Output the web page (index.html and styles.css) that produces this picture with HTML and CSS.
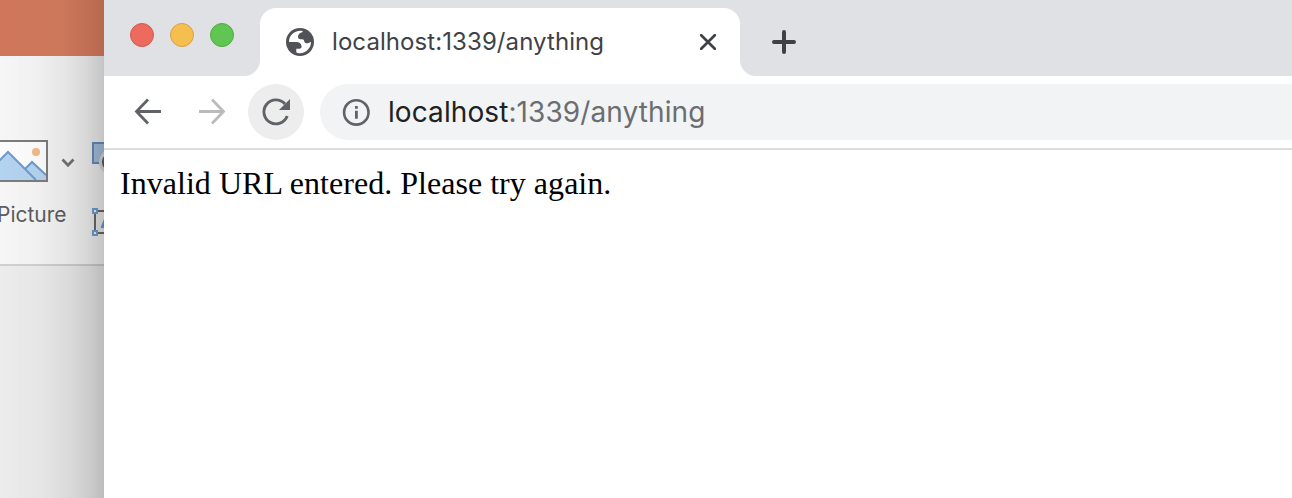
FILE: index.html
```html
<!DOCTYPE html>
<html lang="en">
<head>
<meta charset="utf-8">
<title>localhost:1339/anything</title>
<link rel="stylesheet" href="styles.css">
</head>
<body>
<div class="desktop">
  <aside class="office">
    <div class="office-title"></div>
    <div class="ribbon">
      <div class="ribbon-icons">
        <svg class="picture-icon" width="48" height="42" viewBox="0 0 48 42"><path d="M-2 1H47V41H-2Z" fill="#fdfdfd"/><path d="M-4 24L8 11L36 40H-4Z" fill="#b4d3f0"/><path d="M25 29L32 22L46 35V40H36Z" fill="#b4d3f0"/><path d="M-4 24L8 12L36 40M25 29L32 22L46 35" fill="none" stroke="#6f9bc9" stroke-width="2"/><circle cx="36" cy="12" r="4" fill="#f3ba88"/><path d="M-2 1H47V41H-2Z" fill="none" stroke="#7c7c7c" stroke-width="2"/></svg>
        <svg class="chevron" width="14" height="10" viewBox="0 0 14 10"><path d="M1.5 1.5L7 7.3L12.5 1.5" fill="none" stroke="#757575" stroke-width="2.7"/></svg>
        <svg class="shapes-icon" width="12" height="30" viewBox="0 0 12 30"><path d="M1 1H20V21H1Z" fill="#a9c4e4" stroke="#6a90c2" stroke-width="2"/><circle cx="20" cy="20" r="13" fill="#ddd"/><circle cx="20" cy="20" r="9.5" fill="#666" stroke="#555" stroke-width="1"/></svg>
      </div>
      <div class="ribbon-labels">
        <span class="label">Picture</span>
        <svg class="textbox-icon" width="12" height="28" viewBox="0 0 12 28"><path d="M3 3H20V25H3Z" fill="#f3f3f3" stroke="#6c6c6c" stroke-width="2"/><path d="M10 20L14 10" stroke="#6a9fd5" stroke-width="3"/><path d="M1 1H5V5H1ZM1 23H5V27H1Z" fill="#f4faff" stroke="#73a3d4" stroke-width="2"/></svg>
      </div>
    </div>
    <div class="office-canvas"></div>
    <div class="window-shadow"></div>
  </aside>
  <main class="browser">
    <div class="tab-strip">
      <div class="lights"><i class="light red"></i><i class="light yellow"></i><i class="light green"></i></div>
      <div class="tab">
        <svg class="globe" width="28" height="28" viewBox="0 0 28 28"><circle cx="14" cy="14" r="14" fill="#505257"/><path d="M3 14C3 7.8 7.8 3 14.5 2.8C16 2.8 16.8 3.2 16.8 4C13.5 4.8 12 6.5 12 9C12 11 13.5 11.2 16 11.2C18 11.5 18 12.3 18.5 14C19.5 16 22.5 15.5 25 13.8C25.2 20 20 25.2 14 25.2C12.5 25.2 11 24.8 10.3 24.2V20.8H13C15 20.8 16 19.5 15.5 18C15 15.5 13.5 14 10 14Z" fill="#fff"/></svg>
        <span class="tab-title">localhost:1339/anything</span>
        <svg class="close" width="16" height="16" viewBox="0 0 16 16"><path d="M1.2 1.2L14.8 14.8M14.8 1.2L1.2 14.8" stroke="#3e4145" stroke-width="2.7" stroke-linecap="round"/></svg>
      </div>
      <svg class="new-tab" width="24" height="24" viewBox="0 0 24 24"><path d="M12 2V22M2 12H22" stroke="#3e4145" stroke-width="4" stroke-linecap="round"/></svg>
    </div>
    <div class="toolbar">
      <svg class="nav" width="56" height="56" viewBox="0 0 56 56"><path d="M41 27.5H17M28 15.5L16.5 27.5L28 39.5" fill="none" stroke="#5f6368" stroke-width="2.8"/></svg>
      <svg class="nav" width="56" height="56" viewBox="0 0 56 56"><path d="M15 27.5H39M28 15.5L39.5 27.5L28 39.5" fill="none" stroke="#b9bbbd" stroke-width="2.8"/></svg>
      <svg class="nav reload" width="56" height="56" viewBox="0 0 56 56"><path d="M39.2 32A12 12 0 1 1 37 20" fill="none" stroke="#5f6368" stroke-width="2.9"/><path d="M42 15V26H31Z" fill="#5f6368"/></svg>
      <div class="address">
        <svg class="info" width="28" height="28" viewBox="0 0 28 28"><circle cx="14.3" cy="14.4" r="12.2" fill="none" stroke="#5f6368" stroke-width="2.6"/><path d="M13 8H15.8V10.8H13ZM13 12.8H15.8V20.8H13Z" fill="#5f6368"/></svg>
        <span class="url"><span class="host">localhost</span>:1339/anything</span>
      </div>
    </div>
    <div class="page">Invalid URL entered. Please try again.</div>
  </main>
</div>
</body>
</html>
```
FILE: styles.css
```css
* { box-sizing: border-box; }
body { margin: 0; overflow: hidden; }
svg { display: block; flex: none; }
.desktop { display: grid; grid-template-columns: 104px 1fr; width: 1292px; height: 498px; background: #fff; }
.office { position: relative; display: flex; flex-direction: column; overflow: hidden; font-family: Inter, sans-serif; }
.office-title { z-index: 1; height: 56px; background: linear-gradient(90deg, #d0775b, #cd775b 60%, #b76950); }
.ribbon { height: 210px; background: #f6f6f6; border-bottom: 2px solid #d0d0d0; padding-top: 84px; }
.ribbon-icons { display: flex; height: 66px; align-items: flex-start; }
.chevron { margin: 18px 0 0 13px; }
.shapes-icon { margin: 2px 0 0 17px; }
.ribbon-labels { display: flex; align-items: flex-start; }
.label { width: 92px; margin-left: -3px; font-size: 21px; line-height: 18px; color: #5d5d5d; }
.textbox-icon { margin: 2px 0 0 3px; }
.office-canvas { flex: 1; background: #ececec; }
.window-shadow { position: absolute; inset: 0; border-right: 1px solid rgba(0,0,0,.2); background: linear-gradient(90deg, rgba(0,0,0,0), rgba(0,0,0,.02) 35%, rgba(0,0,0,.07) 65%, rgba(0,0,0,.13) 85%, rgba(0,0,0,.2)); }
.browser { display: flex; flex-direction: column; min-width: 0; background: #fff; }
.tab-strip { display: flex; height: 76px; background: #dfe1e5; }
.lights { display: flex; gap: 16px; width: 156px; padding: 23px 0 0 26px; }
.light { width: 24px; height: 24px; border-radius: 50%; border: 1px solid; }
.red { background: #ed6a5f; border-color: #d15950; }
.yellow { background: #f5bf4f; border-color: #d6a047; }
.green { background: #61c554; border-color: #53a942; }
.tab { position: relative; display: flex; align-items: center; width: 480px; height: 68px; margin-top: 8px; padding: 0 24px 0 26px; background: #fff; border-radius: 16px 16px 0 0; }
.tab::before, .tab::after { content: ""; position: absolute; bottom: 0; width: 16px; height: 16px; }
.tab::before { left: -16px; background: radial-gradient(circle at 0 0, transparent 15.5px, #fff 16.5px); }
.tab::after { right: -16px; background: radial-gradient(circle at 100% 0, transparent 15.5px, #fff 16.5px); }
.tab-title { flex: 1; margin-left: 18px; font: 24px/32px Inter, sans-serif; letter-spacing: .08px; color: #3f4246; white-space: nowrap; }
.new-tab { margin: 30px 0 0 32px; }
.toolbar { display: flex; height: 74px; padding: 8px 0 0 16px; border-bottom: 2px solid #dcdddd; gap: 8px; }
.reload { background: #ededed; border-radius: 50%; }
.address { display: flex; align-items: center; flex: 1; height: 56px; margin-left: 8px; padding-left: 22px; background: #f1f3f4; border-radius: 28px 0 0 28px; }
.url { margin-left: 18px; font: 28px/36px Inter, sans-serif; letter-spacing: .09px; color: #6b6d70; white-space: nowrap; }
.host { color: #202124; }
.page { padding: 15px 16px; font: 32px/36px "Liberation Serif", serif; letter-spacing: .03px; color: #000; }
```
